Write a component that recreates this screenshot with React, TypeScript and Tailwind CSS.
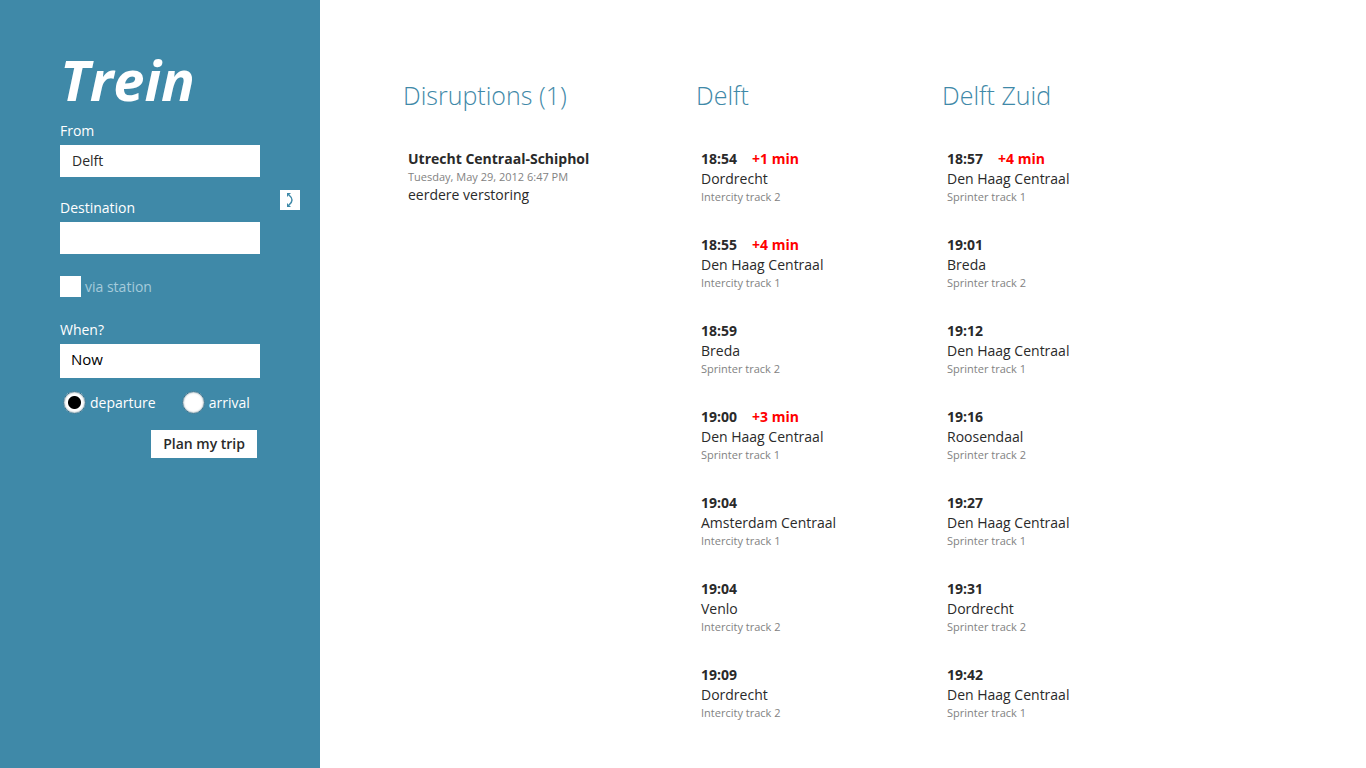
import { useState } from "react";

type Departure = { time: string; delay?: string; destination: string; track: string };

const delft: Departure[] = [
  { time: "18:54", delay: "+1 min", destination: "Dordrecht", track: "Intercity track 2" },
  { time: "18:55", delay: "+4 min", destination: "Den Haag Centraal", track: "Intercity track 1" },
  { time: "18:59", destination: "Breda", track: "Sprinter track 2" },
  { time: "19:00", delay: "+3 min", destination: "Den Haag Centraal", track: "Sprinter track 1" },
  { time: "19:04", destination: "Amsterdam Centraal", track: "Intercity track 1" },
  { time: "19:04", destination: "Venlo", track: "Intercity track 2" },
  { time: "19:09", destination: "Dordrecht", track: "Intercity track 2" },
];

const delftZuid: Departure[] = [
  { time: "18:57", delay: "+4 min", destination: "Den Haag Centraal", track: "Sprinter track 1" },
  { time: "19:01", destination: "Breda", track: "Sprinter track 2" },
  { time: "19:12", destination: "Den Haag Centraal", track: "Sprinter track 1" },
  { time: "19:16", destination: "Roosendaal", track: "Sprinter track 2" },
  { time: "19:27", destination: "Den Haag Centraal", track: "Sprinter track 1" },
  { time: "19:31", destination: "Dordrecht", track: "Sprinter track 2" },
  { time: "19:42", destination: "Den Haag Centraal", track: "Sprinter track 1" },
];

function Heading({ children }: { children: React.ReactNode }) {
  return <h2 className="text-[25px] leading-8 font-light text-[#3f89a8]">{children}</h2>;
}

function Station({ name, departures }: { name: string; departures: Departure[] }) {
  return (
    <section>
      <Heading>{name}</Heading>
      <ul className="mt-[38px] flex flex-col gap-[30px] pl-[5px]">
        {departures.map((d, i) => (
          <li key={i}>
            <p className="flex gap-[15px] font-bold">
              <span>{d.time}</span>
              {d.delay && <span className="text-[#ff0000]">{d.delay}</span>}
            </p>
            <p>{d.destination}</p>
            <p className="text-[11px] leading-4 text-[#828282]">{d.track}</p>
          </li>
        ))}
      </ul>
    </section>
  );
}

function Radio({ label, value, current, onChange }: {
  label: string;
  value: string;
  current: string;
  onChange: (value: string) => void;
}) {
  return (
    <label className="flex items-center gap-1">
      <input
        type="radio"
        name="direction"
        value={value}
        checked={current === value}
        onChange={() => onChange(value)}
        className="size-[23px] appearance-none rounded-full border border-[#3b7590] bg-white shadow-[inset_0_0_2px_#4f6e7b] checked:bg-[radial-gradient(circle,#000_6px,#fff_7px)]"
      />
      {label}
    </label>
  );
}

export default function App() {
  const [from, setFrom] = useState("Delft");
  const [to, setTo] = useState("");
  const [when, setWhen] = useState("Now");
  const [direction, setDirection] = useState("departure");

  return (
    <div className="flex min-h-screen bg-white font-['Open_Sans','Noto_Sans',sans-serif] text-sm leading-5 text-[#2a2a2a]">
      <aside className="w-80 shrink-0 bg-[#3f89a8] pt-[47px] pr-5 pl-[60px] text-white">
        <h1 className="text-[56px] leading-[64px] font-bold italic">Trein</h1>
        <form className="mt-2.5" onSubmit={(e) => e.preventDefault()}>
          <div className="flex gap-5">
            <div className="flex w-[200px] flex-col">
              <label htmlFor="from">From</label>
              <input
                id="from"
                value={from}
                onChange={(e) => setFrom(e.target.value)}
                className="mt-1 h-8 w-full bg-white px-3 pb-0.5 text-[#2a2a2a]"
              />
              <label htmlFor="destination" className="mt-[21px]">Destination</label>
              <input
                id="destination"
                value={to}
                onChange={(e) => setTo(e.target.value)}
                className="mt-1 h-8 w-full bg-white px-3 pb-0.5 text-[#2a2a2a]"
              />
            </div>
            <button
              type="button"
              aria-label="Swap stations"
              onClick={() => {
                setFrom(to);
                setTo(from);
              }}
              className="mt-[69px] flex size-5 items-center justify-center bg-white text-[#3f89a8]"
            >
              <svg width="20" height="20" viewBox="0 0 20 20" fill="none">
                <path d="M9 5Q15 10 9 15" stroke="currentColor" strokeWidth="1.5" />
                <path d="M7 3H11L7 7ZM7 17H11L7 13Z" fill="currentColor" />
              </svg>
            </button>
          </div>
          <div className="mt-[22px] flex items-center gap-1">
            <input id="via" type="checkbox" className="size-[21px] appearance-none bg-white" />
            <label htmlFor="via" className="text-[#a5cbdb]">via station</label>
          </div>
          <div className="mt-[23px] flex w-[200px] flex-col">
            <label htmlFor="when">When?</label>
            <input
              id="when"
              value={when}
              onChange={(e) => setWhen(e.target.value)}
              className="mt-1 h-[34px] w-full bg-white px-[11px] pb-1 text-[15px] text-black"
            />
          </div>
          <div className="mt-[13px] ml-[3px] flex gap-[26px]">
            <Radio label="departure" value="departure" current={direction} onChange={setDirection} />
            <Radio label="arrival" value="arrival" current={direction} onChange={setDirection} />
          </div>
          <div className="mt-4 flex w-[197px] justify-end">
            <button type="submit" className="h-7 bg-white px-3 font-semibold text-[#2a2a2a]">
              Plan my trip
            </button>
          </div>
        </form>
      </aside>
      <main className="grid flex-1 grid-cols-[293px_246px_1fr] content-start pt-[79px] pl-[83px]">
        <section>
          <Heading>Disruptions (1)</Heading>
          <article className="mt-[38px] pl-[5px]">
            <h3 className="font-bold">Utrecht Centraal-Schiphol</h3>
            <p className="text-[11px] leading-4 text-[#828282]">Tuesday, May 29, 2012 6:47 PM</p>
            <p>eerdere verstoring</p>
          </article>
        </section>
        <Station name="Delft" departures={delft} />
        <Station name="Delft Zuid" departures={delftZuid} />
      </main>
    </div>
  );
}
